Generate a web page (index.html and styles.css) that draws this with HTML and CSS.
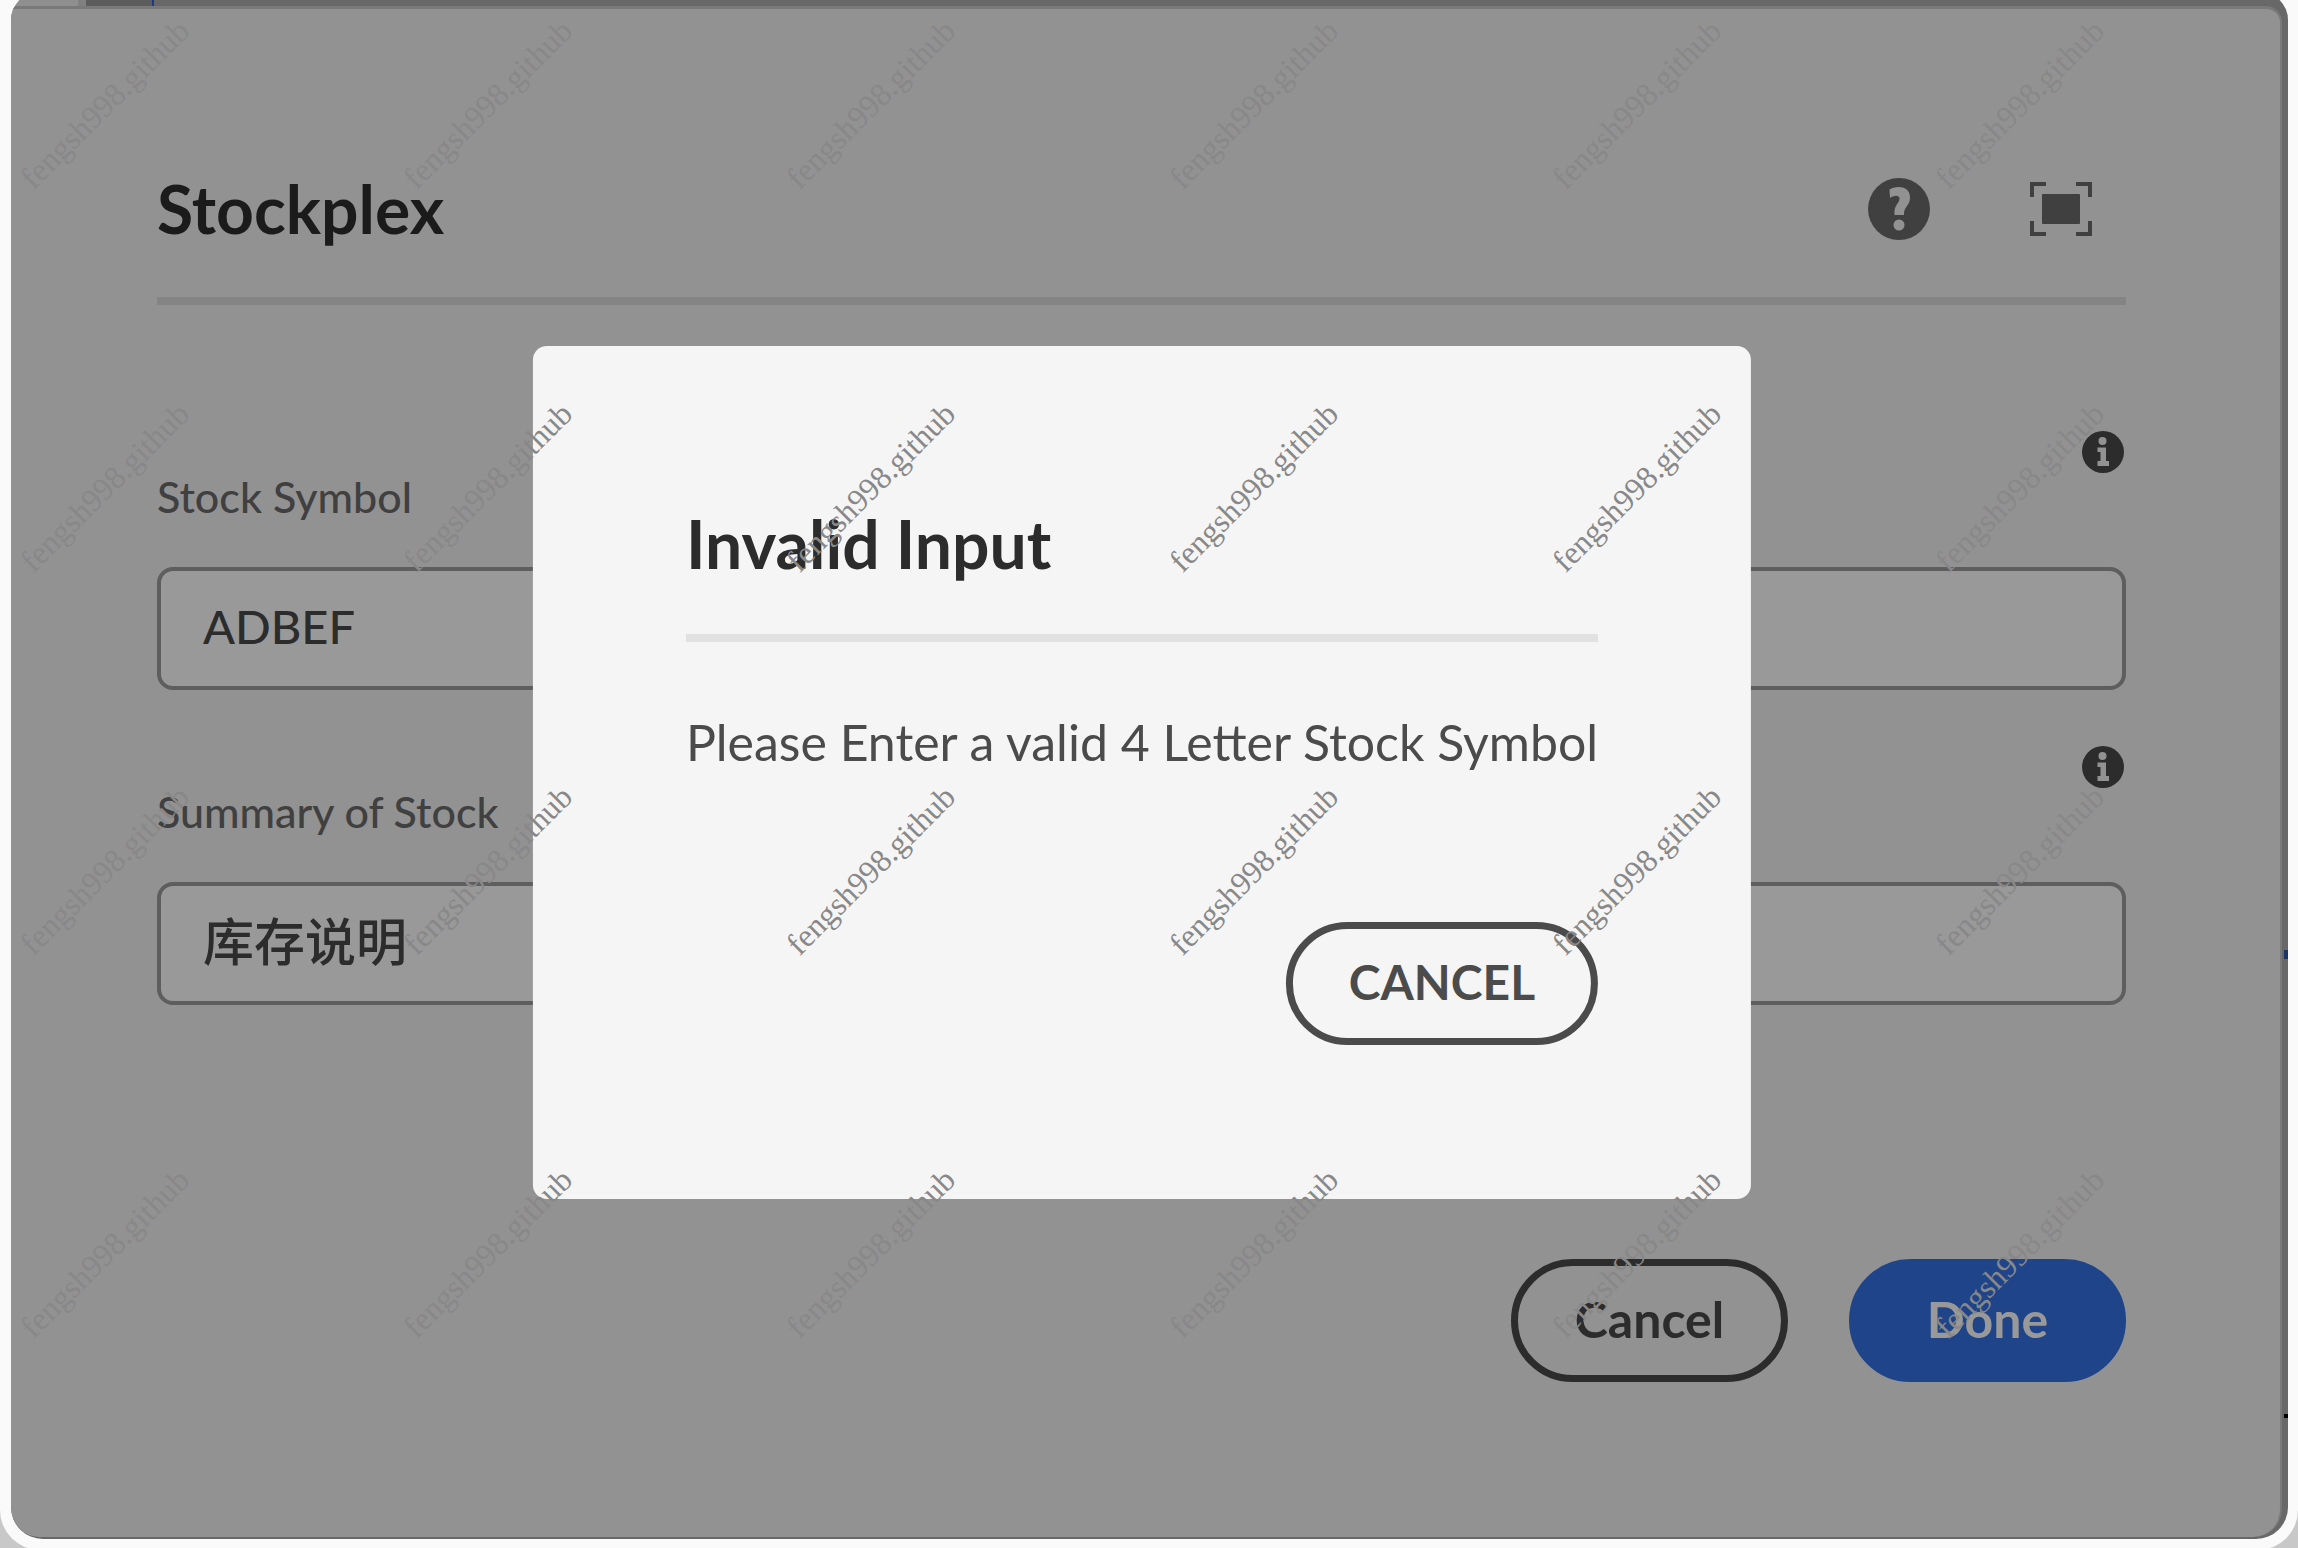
FILE: index.html
```html
<!DOCTYPE html>
<html lang="en">
<head>
<meta charset="utf-8">
<title>Stockplex</title>
<link rel="stylesheet" href="styles.css">
</head>
<body>
<div class="window">
  <div class="shell">
  <main class="panel">
    <header class="panel-header">
      <h1 class="heading">Stockplex</h1>
      <div class="tools">
        <button class="icon-button" type="button" aria-label="Help">
          <svg class="tool-icon" viewBox="0 0 62 62" aria-hidden="true"><circle cx="31" cy="31" r="31" fill="#404040"/><path d="M21.500 11.500C27 7.500 42 7 42 19.500C42 28.500 35.500 28 36 37H26.500C25.500 26.500 31.500 26 31.500 20.500C31.500 16.500 25.500 17 22 20Z" fill="#929292"/><circle cx="31" cy="47" r="5.500" fill="#929292"/></svg>
        </button>
        <button class="icon-button" type="button" aria-label="Full screen">
          <svg class="tool-icon" viewBox="0 0 62 62" aria-hidden="true"><rect x="12" y="16" width="38" height="30" rx="1" fill="#404040"/><path d="M2 19V6H16M46 6H60V19M60 43V56H46M16 56H2V43" fill="none" stroke="#404040" stroke-width="4"/></svg>
        </button>
      </div>
    </header>
    <form class="form">
      <div class="field">
        <div class="field-head">
          <label class="label" for="symbol">Stock Symbol</label>
          <svg class="info" viewBox="0 0 42 42" aria-hidden="true"><circle cx="21" cy="21" r="21" fill="#2c2c2c"/><circle cx="20.500" cy="10" r="4" fill="#929292"/><path d="M15.500 16.500H24V30H27V35H15.500V30H18.500V21H15.500Z" fill="#929292"/></svg>
        </div>
        <input class="input" id="symbol" type="text" value="ADBEF">
      </div>
      <div class="field">
        <div class="field-head">
          <label class="label" for="summary">Summary of Stock</label>
          <svg class="info" viewBox="0 0 42 42" aria-hidden="true"><circle cx="21" cy="21" r="21" fill="#2c2c2c"/><circle cx="20.500" cy="10" r="4" fill="#929292"/><path d="M15.500 16.500H24V30H27V35H15.500V30H18.500V21H15.500Z" fill="#929292"/></svg>
        </div>
        <input class="input cjk" id="summary" type="text" lang="zh" value="库存说明">
      </div>
      <div class="actions">
        <button class="button outline" type="button">Cancel</button>
        <button class="button primary" type="button">Done</button>
      </div>
    </form>
  </main>
  </div>
  <i class="mark mark-blue"></i>
  <i class="mark mark-black"></i>
  <section class="modal" role="dialog" aria-labelledby="modal-title">
    <h2 class="heading modal-heading" id="modal-title">Invalid Input</h2>
    <p class="message">Please Enter a valid 4 Letter Stock Symbol</p>
    <div class="modal-actions">
      <button class="button modal-button" type="button">CANCEL</button>
    </div>
  </section>
  <div class="watermarks" aria-hidden="true">
    <span>fengsh998.github</span><span>fengsh998.github</span><span>fengsh998.github</span><span>fengsh998.github</span><span>fengsh998.github</span><span>fengsh998.github</span>
    <span>fengsh998.github</span><span>fengsh998.github</span><span>fengsh998.github</span><span>fengsh998.github</span><span>fengsh998.github</span><span>fengsh998.github</span>
    <span>fengsh998.github</span><span>fengsh998.github</span><span>fengsh998.github</span><span>fengsh998.github</span><span>fengsh998.github</span><span>fengsh998.github</span>
    <span>fengsh998.github</span><span>fengsh998.github</span><span>fengsh998.github</span><span>fengsh998.github</span><span>fengsh998.github</span><span>fengsh998.github</span>
  </div>
</div>
</body>
</html>
```

FILE: styles.css
```css
* { box-sizing: border-box; }

body {
  margin: 0;
  background: #c8c8c8;
  font-family: "Lato", "Noto Sans CJK SC", sans-serif;
  font-weight: 500;
}

.window {
  position: relative;
  display: flex;
  min-height: 100vh;
  padding: 0 10px 11px 11px;
  background: #fafafa;
  border-radius: 0 0 40px 40px;
  overflow: hidden;
}

/* the page behind the panel shows as a thin strip at the top and right */
.shell {
  flex: 1;
  display: flex;
  margin-top: -8px;
  padding: 14px 6px 2px 0;
  border-radius: 28px 28px 32px 32px;
  background: #686868 linear-gradient(90deg, #8f8f8f 67px, #808080 67px 75px, #5c5c5c 75px 141px, #1f3a80 141px 143px, #686868 143px) top / 100% 40px no-repeat;
  overflow: hidden;
}

.panel {
  flex: 1;
  padding: 136px 154px 155px 146px;
  background: #929292;
  border-top: 3px solid #797979;
  border-right: 2px solid #797979;
  border-radius: 0 16px 28px 28px;
}

.mark {
  position: absolute;
  right: 10px;
  width: 4px;
}

.mark-blue { top: 950px; height: 9px; background: #1c3766; }
.mark-black { top: 1414px; height: 4px; background: #000; }

.panel-header {
  display: flex;
  align-items: center;
  justify-content: space-between;
  height: 160px;
  padding-bottom: 24px;
  border-bottom: 8px solid #848484;
}

.heading {
  margin: 0;
  color: #1b1b1b;
  font-size: 66px;
  line-height: 80px;
  font-weight: 700;
}

.tools {
  display: flex;
  gap: 100px;
  padding-right: 34px;
}

.icon-button {
  display: flex;
  padding: 0;
  border: 0;
  background: none;
}

.tool-icon { width: 62px; height: 62px; }

.form { padding-top: 126px; }

.field { margin-bottom: 56px; }

.field-head {
  display: flex;
  justify-content: space-between;
  height: 136px;
}

.label {
  align-self: center;
  padding-bottom: 4px;
  color: #404040;
  font-size: 43px;
  line-height: 56px;
}

.info { width: 42px; height: 42px; margin-right: 2px; }

.input {
  display: block;
  width: 100%;
  height: 123px;
  padding: 0 42px 6px;
  border: 4px solid #5e5e5e;
  border-radius: 16px;
  background: #999;
  color: #2c2c2c;
  font: inherit;
  font-size: 47px;
}

.cjk {
  padding-bottom: 10px;
  font-size: 51px;
}

.actions {
  display: flex;
  justify-content: flex-end;
  gap: 61px;
  padding-top: 198px;
}

.button {
  min-width: 277px;
  height: 123px;
  padding: 0 54px 4px;
  border: 7px solid #2c2c2c;
  border-radius: 62px;
  background: none;
  color: #2c2c2c;
  font: inherit;
  font-size: 50px;
  font-weight: 700;
}

.primary {
  border-color: #1f4489;
  background: #1f4489;
  color: #999;
}

.modal {
  position: absolute;
  top: 346px;
  left: 50%;
  transform: translateX(-50%);
  margin-left: -7px;
  padding: 158px 153px 154px;
  border-radius: 14px;
  background: #f5f5f5;
}

.modal-heading {
  padding-bottom: 50px;
  border-bottom: 8px solid #e1e1e1;
  color: #2c2c2c;
}

.message {
  margin: 68px 0 0;
  color: #4b4b4b;
  font-size: 50px;
  font-weight: 400;
  line-height: 64px;
  white-space: nowrap;
}

.modal-actions {
  display: flex;
  justify-content: flex-end;
  padding-top: 148px;
}

.modal-button {
  padding: 0 56px 4px;
  border-color: #4b4b4b;
  color: #4b4b4b;
  font-size: 48px;
}

.watermarks {
  position: absolute;
  inset: 0;
  display: grid;
  grid-template-columns: repeat(auto-fill, 383px);
  grid-auto-rows: 383px;
  overflow: hidden;
  pointer-events: none;
}

.watermarks span {
  justify-self: start;
  align-self: start;
  margin: 86px 0 0 -7px;
  color: #888;
  font: 32px/36px "Liberation Serif", serif;
  transform: rotate(-45deg);
}
```
